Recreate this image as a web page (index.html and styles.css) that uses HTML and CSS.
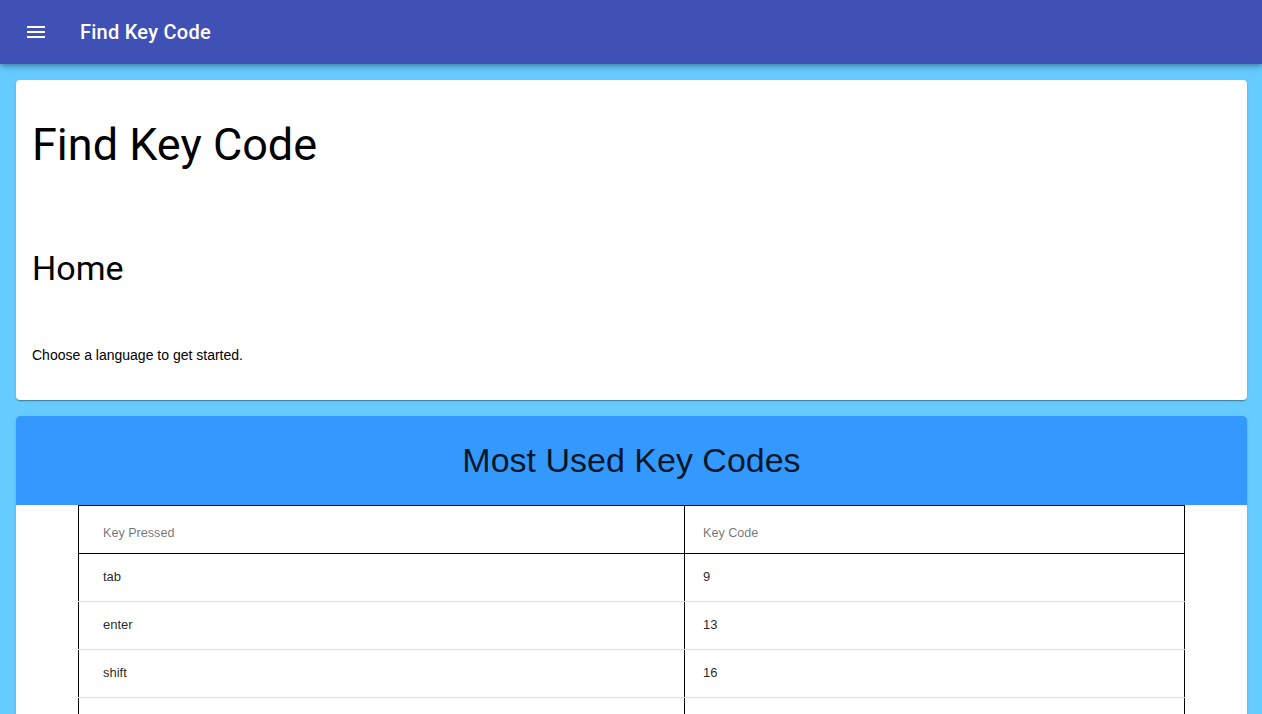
FILE: index.html
```html
<!DOCTYPE html>
<html>
<head>
<meta charset="utf-8">
<title>Find Key Code</title>
<link rel="stylesheet" href="styles.css">
</head>
<body>
<header class="toolbar">
  <button class="menu-btn" aria-label="menu">
    <svg width="24" height="24" viewBox="0 0 24 24"><path fill="#fff" d="M3 18h18v-2H3v2zm0-5h18v-2H3v2zm0-7v2h18V6H3z"/></svg>
  </button>
  <span class="toolbar-title">Find Key Code</span>
</header>
<main class="content">
  <section class="card intro">
    <h1 class="display">Find Key Code</h1>
    <h2 class="subtitle">Home</h2>
    <p class="lead">Choose a language to get started.</p>
  </section>
  <section class="card codes">
    <div class="codes-head"><h2 class="codes-title">Most Used Key Codes</h2></div>
    <table class="key-table">
      <thead>
        <tr><th class="col-key">Key Pressed</th><th class="col-code">Key Code</th></tr>
      </thead>
      <tbody>
        <tr><td class="col-key">tab</td><td class="col-code">9</td></tr>
        <tr><td class="col-key">enter</td><td class="col-code">13</td></tr>
        <tr><td class="col-key">shift</td><td class="col-code">16</td></tr>
        <tr><td class="col-key">ctrl</td><td class="col-code">17</td></tr>
      </tbody>
    </table>
  </section>
</main>
</body>
</html>
```
FILE: styles.css
```css
html, body {
  margin: 0;
  padding: 0;
}
body {
  background: #66ccff;
  font-family: Roboto, "Liberation Sans", Arial, sans-serif;
  color: #000;
  overflow: hidden;
}
.toolbar {
  height: 64px;
  background: #3f51b5;
  display: flex;
  align-items: center;
  padding: 0 16px;
  box-sizing: border-box;
  box-shadow: 0 2px 4px -1px rgba(0,0,0,.2), 0 4px 5px 0 rgba(0,0,0,.14), 0 1px 10px 0 rgba(0,0,0,.12);
  position: relative;
  z-index: 2;
}
.menu-btn {
  width: 40px;
  height: 40px;
  border: 0;
  background: transparent;
  padding: 0;
  display: flex;
  align-items: center;
  justify-content: center;
  margin-right: 24px;
}
.menu-btn svg { display: block; }
.toolbar-title {
  color: #fff;
  font-size: 20px;
  font-weight: 500;
  letter-spacing: 0.25px;
}
.content {
  padding: 16px 15px 16px 16px;
  display: flex;
  flex-direction: column;
  gap: 16px;
}
.card {
  background: #fff;
  border-radius: 4px;
  box-shadow: 0 2px 1px -1px rgba(0,0,0,.2), 0 1px 1px 0 rgba(0,0,0,.14), 0 1px 3px 0 rgba(0,0,0,.12);
  overflow: hidden;
}
.intro {
  padding: 16px 16px 35px 16px;
}
.display {
  font-size: 45px;
  font-weight: 400;
  line-height: 48px;
  margin: 25px 0 0 0;
}
.subtitle {
  font-size: 34px;
  font-weight: 400;
  line-height: 40px;
  margin: 79px 0 0 0;
}
.lead {
  font-family: "Liberation Sans", Arial, sans-serif;
  font-size: 14px;
  line-height: 20px;
  margin: 57px 0 0 0;
}
.codes-head {
  background: #3399ff;
  height: 89px;
  display: flex;
  align-items: center;
  justify-content: center;
}
.codes-title {
  margin: 0;
  font-family: "Liberation Sans", Arial, sans-serif;
  font-size: 34px;
  font-weight: 400;
  color: rgba(0,0,0,.87);
}
.key-table {
  width: 1107px;
  margin: 0 auto;
  border-collapse: collapse;
  border: 1px solid #000;
  font-family: "Liberation Sans", Arial, sans-serif;
}
.key-table th, .key-table td {
  text-align: left;
  padding: 0;
  box-sizing: border-box;
}
.key-table th {
  font-size: 12.6px;
  font-weight: 400;
  color: rgba(0,0,0,.56);
  border-bottom: 1px solid #000;
  height: 48px;
  padding-top: 6px;
}
.key-table td {
  font-size: 13px;
  color: rgba(0,0,0,.87);
  border-bottom: 1px solid #e0e0e0;
  height: 48px;
  padding-bottom: 2px;
}
.col-key {
  width: 606px;
  padding-left: 24px !important;
  border-right: 1px solid #000;
}
.col-code {
  padding-left: 18px !important;
}
```
